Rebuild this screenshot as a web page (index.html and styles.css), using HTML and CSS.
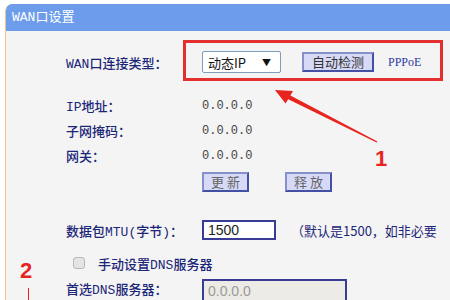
FILE: index.html
```html
<!DOCTYPE html>
<html lang="zh-CN">
<head>
  <meta charset="UTF-8">
  <title>WAN口设置</title>
  <link rel="stylesheet" href="styles.css">
</head>
<body>
  <div class="panel">
    <div class="panel-head">WAN口设置</div>
    <div class="panel-body">
      <div class="row row-type">
        <span class="label">WAN口连接类型：</span>
        <div class="controls">
          <div class="select-box"><span>动态IP</span><span class="arrow">▼</span></div>
          <button class="btn btn-detect">自动检测</button>
          <span class="link">PPPoE</span>
        </div>
      </div>

      <div class="row row-info first">
        <span class="label">IP地址：</span>
        <span class="value">0.0.0.0</span>
      </div>
      <div class="row row-info">
        <span class="label">子网掩码：</span>
        <span class="value">0.0.0.0</span>
      </div>
      <div class="row row-info">
        <span class="label">网关：</span>
        <span class="value">0.0.0.0</span>
      </div>
      <div class="row row-buttons">
        <span></span>
        <div class="controls">
          <button class="btn btn-small">更 新</button>
          <button class="btn btn-small">释 放</button>
        </div>
      </div>

      <div class="row row-mtu">
        <span class="label">数据包MTU(字节)：</span>
        <div class="controls">
          <input class="field field-mtu" type="text" value="1500">
          <span class="note">（默认是1500，如非必要</span>
        </div>
      </div>

      <div class="row-check">
        <span class="checkbox"></span>
        <span class="label">手动设置DNS服务器</span>
      </div>

      <div class="row row-dns">
        <span class="label">首选DNS服务器：</span>
        <input class="field field-dns" type="text" value="0.0.0.0" disabled>
      </div>
    </div>
  </div>

  <!-- annotations drawn over the screenshot -->
  <div class="mark-box"></div>
  <svg class="mark-arrow" width="450" height="300" viewBox="0 0 450 300">
    <polygon fill="#e8241f" points="275,90 293,91 290.4,95.4 377.4,141.4 376.6,142.6 288.2,99.2 285.5,103.5"/>
  </svg>
  <span class="mark-num mark-one">1</span>
  <span class="mark-num mark-two">2</span>
  <span class="mark-line"></span>
</body>
</html>
```

FILE: styles.css
```css
/* General */
body {
  margin: 0;
  background-color: #fff;
  font-family: "Noto Sans CJK SC", sans-serif;
  font-size: 13px;
  overflow: hidden;
}

/* Panel */
.panel {
  margin: 4px 0 0 5px;
  height: 296px;
  background-color: #f4f4f4;
  border-left: 1px solid #f2c58c;
  border-radius: 7px 0 0 0;
  overflow: hidden;
}

.panel-head {
  height: 27px;
  line-height: 27px;
  padding-left: 6px;
  background-color: #6d9ceb;
  color: #fff;
  font-family: "Liberation Mono", "Noto Sans CJK SC", monospace;
  font-size: 13px;
}

.panel-body {
  padding: 20px 0 0 60px;
}

/* Rows */
.row {
  display: grid;
  grid-template-columns: 136px auto;
  align-items: center;
}

.label {
  color: #1c2678;
  font-family: "Liberation Mono", "Noto Sans CJK SC", monospace;
  font-size: 13px;
  font-weight: 500;
  white-space: nowrap;
}

.controls {
  display: flex;
  align-items: center;
}

.value {
  color: #444;
  font-family: "Liberation Mono", monospace;
  font-size: 12px;
}

.row-type {
  height: 22px;
}

.row-info {
  height: 25px;
}

.row-info.first {
  margin-top: 20px;
}

.row-buttons {
  margin-top: 4px;
  height: 20px;
}

.row-mtu {
  margin-top: 28px;
  height: 20px;
}

.row-check {
  margin-top: 12px;
  height: 22px;
  display: flex;
  align-items: center;
  padding-left: 7px;
}

.row-check .label {
  margin-left: 13px;
}

.row-dns {
  margin-top: 5px;
  align-items: start;
  height: 22px;
}

/* Select */
.select-box {
  width: 79px;
  height: 22px;
  border: 1px solid #7f9db9;
  border-radius: 2px;
  background-color: #fff;
  display: flex;
  align-items: center;
  justify-content: space-between;
  padding: 0 9px 0 5px;
  box-sizing: border-box;
  color: #111;
  font-size: 13px;
}

.select-box .arrow {
  font-size: 9px;
  color: #111;
}

/* Buttons */
.btn {
  background-color: #d7daf7;
  border: 2px solid #4450a4;
  border-top-color: #8890cc;
  border-left-color: #8890cc;
  color: #555;
  font-family: "Noto Sans CJK SC", sans-serif;
  padding: 0;
  box-sizing: border-box;
}

.btn-detect {
  margin-left: 21px;
  width: 72px;
  height: 20px;
  font-size: 13px;
  line-height: 16px;
  color: #333;
}

.btn-small {
  width: 47px;
  height: 20px;
  font-size: 13px;
  line-height: 16px;
  color: #666;
}

.btn-small + .btn-small {
  margin-left: 36px;
}

.link {
  margin-left: 14px;
  color: #2c3aa0;
  font-family: "Liberation Serif", serif;
  font-size: 12px;
}

/* Inputs */
.field {
  margin: 0;
  padding: 0 0 0 4px;
  box-sizing: border-box;
  height: 20px;
  border: 2px solid #383c94;
  font-family: "Liberation Sans", Arial, sans-serif;
  font-size: 14px;
  color: #222;
  background-color: #fff;
}

.field-mtu {
  width: 74px;
}

.field-dns {
  width: 145px;
  height: 24px;
  background-color: #ecebe5;
  color: #9a9a9a;
}

.note {
  margin-left: 15px;
  color: #1c2678;
  font-size: 13px;
  white-space: nowrap;
}

.checkbox {
  width: 10px;
  height: 10px;
  border: 1px solid #b8b8b8;
  border-radius: 3px;
  background-color: #e4e4e4;
}

/* Annotations */
.mark-box {
  position: absolute;
  left: 183px;
  top: 40px;
  width: 254px;
  height: 35px;
  border: 3px solid #e3302e;
}

.mark-arrow {
  position: absolute;
  left: 0;
  top: 0;
}

.mark-num {
  position: absolute;
  color: #e8241f;
  font-family: "Liberation Sans", Arial, sans-serif;
  font-weight: bold;
  font-size: 22px;
  line-height: 22px;
}

.mark-one {
  left: 375px;
  top: 148px;
}

.mark-two {
  left: 20px;
  top: 260px;
}

.mark-line {
  position: absolute;
  left: 28px;
  top: 288px;
  width: 1px;
  height: 12px;
  background-color: #e8241f;
}
```
